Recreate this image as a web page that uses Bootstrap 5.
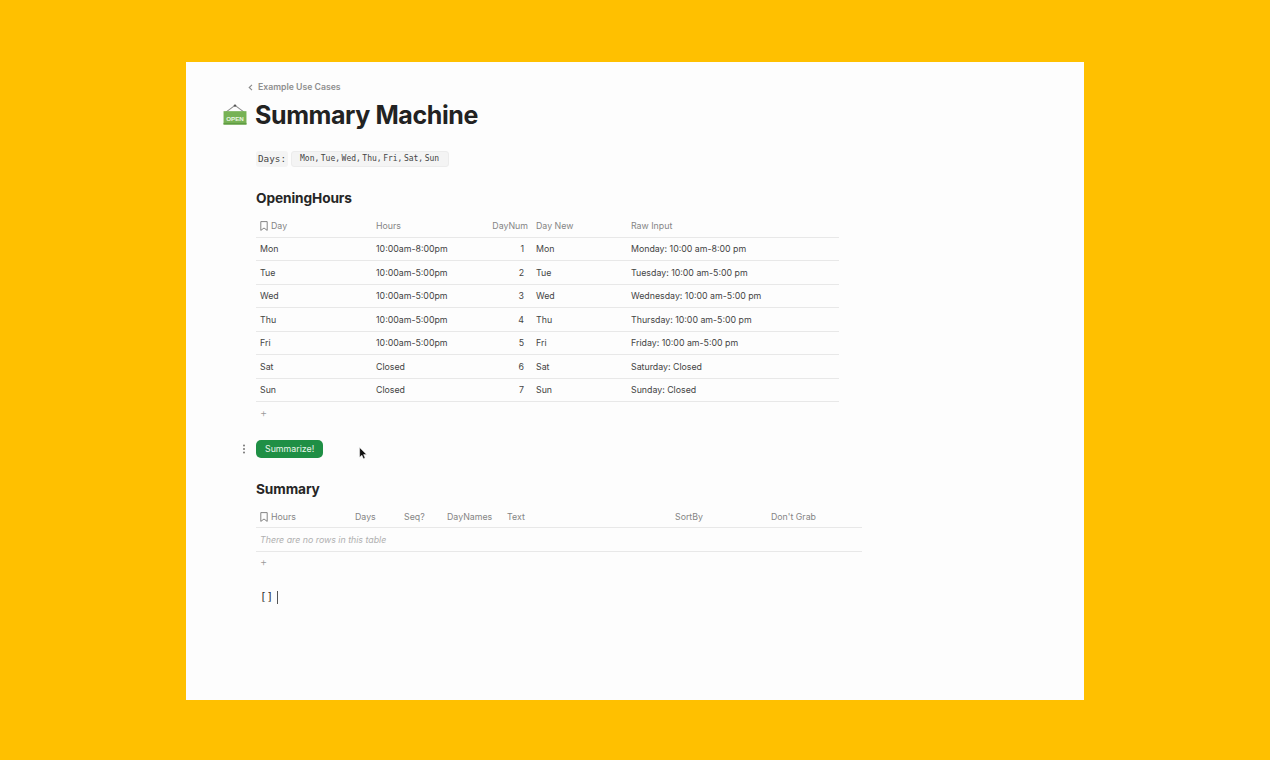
<!DOCTYPE html>
<html lang="en">
<head>
<meta charset="utf-8">
<title>Summary Machine</title>
<link href="https://cdn.jsdelivr.net/npm/bootstrap@5.3.0/dist/css/bootstrap.min.css" rel="stylesheet">
<style>
html,body{height:100%}
body{background:#ffc000;font-family:Inter,"Liberation Sans",sans-serif;color:#2b2b2b;overflow:hidden;padding:62px 186px 60px}
.sheet{background:#fdfdfd;height:638px;width:898px;padding:0 0 0 70px;position:relative}
.crumb{font-size:8.7px;font-weight:600;color:#8f8f8f;height:25px;padding-top:19px;line-height:12px;margin-left:-8px}
.crumb svg{margin-right:5px;vertical-align:-1px}
.pagehead{position:relative;height:47px;padding-top:6px}
.pagehead h1{font-size:25px;font-weight:700;letter-spacing:-.4px;line-height:44px;margin:0 0 0 -1px;color:#222}
.openicon{position:absolute;left:-33px;top:17px}
.formula{font-family:"DejaVu Sans Mono","Liberation Mono",monospace;font-size:8px;color:#444;height:16px;margin-top:17px;word-spacing:-3.3px}
.formula .lbl{background:#f4f4f4;border-radius:3px;font-size:9.3px;padding:1px 2px;margin-right:3px;line-height:14px}
.formula .val{background:#f4f4f4;border:1px solid #ececec;border-radius:3px;padding:0 9px 0 8px;line-height:14px;height:16px}
.sect{font-size:13.7px;font-weight:700;letter-spacing:-.1px;color:#262626;line-height:18px;margin:0}
.sect.t1{margin-top:22px}
table.grid{table-layout:fixed;border-collapse:collapse;font-size:8.8px;margin:0;color:#444}
table.grid th{font-weight:400;color:#858585;padding:0 4px;height:22px;border-bottom:1px solid #e8e8e8;white-space:nowrap;vertical-align:middle}
table.grid td{padding:0 4px;height:23.5px;border-bottom:1px solid #e8e8e8;white-space:nowrap;vertical-align:middle}
table.grid th.num,table.grid td.num{text-align:right}
table.grid td.num{padding-right:8px}
.bm{margin-right:3px;vertical-align:-2px}
.adder{font-size:11px;line-height:12px;color:#9a9a9a;padding-left:4px;height:12px;margin-top:4.5px;font-weight:300}
.actionrow{position:relative;margin-top:21px;height:18px}
.dots{position:absolute;left:-14.5px;top:4px}
.btn.go{background:#1f8f45;border:0;color:#e9f5ec;font-size:8.8px;line-height:18px;padding:0 9px;border-radius:5px;height:18px;width:67px;display:block;white-space:nowrap}
.pointer{position:absolute;left:103px;top:7px}
.sect.t2{margin-top:22px}
.empty{font-style:italic;color:#b0b0b0}
.result{font-family:"DejaVu Sans Mono","Liberation Mono",monospace;font-size:11px;color:#333;margin-top:21px;padding-left:4px;height:16px;line-height:16px;display:flex;align-items:center}
.caret{display:inline-block;width:1px;height:13px;background:#555;margin-left:4px}
</style>
</head>
<body>
<main class="sheet">
  <div class="crumb">
    <svg width="5" height="7" viewBox="0 0 5 7" aria-hidden="true"><path d="M4 .8 1.2 3.5 4 6.2" fill="none" stroke="#8a8a8a" stroke-width="1.1"/></svg>Example Use Cases
  </div>
  <div class="pagehead">
    <svg class="openicon" width="24" height="21" viewBox="0 0 25 22" aria-hidden="true">
      <path d="M3 8.5 12.5 1.5 22 8.5" fill="none" stroke="#8d8d8d" stroke-width="1.1"/>
      <circle cx="12.5" cy="1.7" r="1.3" fill="#555"/>
      <rect x=".5" y="7.5" width="24" height="14" fill="#77b255"/>
      <rect x=".5" y="19.8" width="24" height="1.7" fill="#5f9c42"/>
      <text x="12.5" y="17.3" text-anchor="middle" font-family="Liberation Sans,sans-serif" font-size="6.5" font-weight="700" fill="#eaf5e2">OPEN</text>
    </svg>
    <h1>Summary Machine</h1>
  </div>
  <div class="formula d-flex align-items-center"><span class="lbl">Days:</span><span class="val">Mon, Tue, Wed, Thu, Fri, Sat, Sun</span></div>

  <h2 class="sect t1">OpeningHours</h2>
  <table class="grid mt-2" style="width:583px">
    <colgroup><col style="width:116px"><col style="width:116px"><col style="width:44px"><col style="width:95px"><col style="width:212px"></colgroup>
    <thead><tr>
      <th><svg class="bm" width="8" height="10" viewBox="0 0 8 10" aria-hidden="true"><path d="M.8.6h6.4v8.8L4 7 .8 9.4z" fill="none" stroke="#777" stroke-width=".9"/></svg>Day</th>
      <th>Hours</th><th class="num">DayNum</th><th>Day New</th><th>Raw Input</th>
    </tr></thead>
    <tbody>
      <tr><td>Mon</td><td>10:00am-8:00pm</td><td class="num">1</td><td>Mon</td><td>Monday: 10:00 am-8:00 pm</td></tr>
      <tr><td>Tue</td><td>10:00am-5:00pm</td><td class="num">2</td><td>Tue</td><td>Tuesday: 10:00 am-5:00 pm</td></tr>
      <tr><td>Wed</td><td>10:00am-5:00pm</td><td class="num">3</td><td>Wed</td><td>Wednesday: 10:00 am-5:00 pm</td></tr>
      <tr><td>Thu</td><td>10:00am-5:00pm</td><td class="num">4</td><td>Thu</td><td>Thursday: 10:00 am-5:00 pm</td></tr>
      <tr><td>Fri</td><td>10:00am-5:00pm</td><td class="num">5</td><td>Fri</td><td>Friday: 10:00 am-5:00 pm</td></tr>
      <tr><td>Sat</td><td>Closed</td><td class="num">6</td><td>Sat</td><td>Saturday: Closed</td></tr>
      <tr><td>Sun</td><td>Closed</td><td class="num">7</td><td>Sun</td><td>Sunday: Closed</td></tr>
    </tbody>
  </table>
  <div class="adder">+</div>

  <div class="actionrow">
    <svg class="dots" width="4" height="10" viewBox="0 0 4 10" aria-hidden="true"><circle cx="2" cy="1.5" r="1" fill="#777"/><circle cx="2" cy="5" r="1" fill="#777"/><circle cx="2" cy="8.5" r="1" fill="#777"/></svg>
    <button class="btn go" type="button">Summarize!</button>
    <svg class="pointer" width="9" height="13" viewBox="0 0 9 13" aria-hidden="true"><path d="M.6.6v9.6l2.3-2 1.5 3.6 1.7-.7-1.5-3.5h3z" fill="#111" stroke="#fff" stroke-width=".5"/></svg>
  </div>

  <h2 class="sect t2">Summary</h2>
  <table class="grid mt-2" style="width:606px">
    <colgroup><col style="width:95px"><col style="width:49px"><col style="width:43px"><col style="width:60px"><col style="width:168px"><col style="width:96px"><col style="width:95px"></colgroup>
    <thead><tr>
      <th><svg class="bm" width="8" height="10" viewBox="0 0 8 10" aria-hidden="true"><path d="M.8.6h6.4v8.8L4 7 .8 9.4z" fill="none" stroke="#777" stroke-width=".9"/></svg>Hours</th>
      <th>Days</th><th>Seq?</th><th>DayNames</th><th>Text</th><th>SortBy</th><th>Don't Grab</th>
    </tr></thead>
    <tbody><tr><td class="empty" colspan="7">There are no rows in this table</td></tr></tbody>
  </table>
  <div class="adder">+</div>

  <div class="result">[]<span class="caret"></span></div>
</main>
<script src="https://cdn.jsdelivr.net/npm/bootstrap@5.3.0/dist/js/bootstrap.bundle.min.js"></script>
</body>
</html>
